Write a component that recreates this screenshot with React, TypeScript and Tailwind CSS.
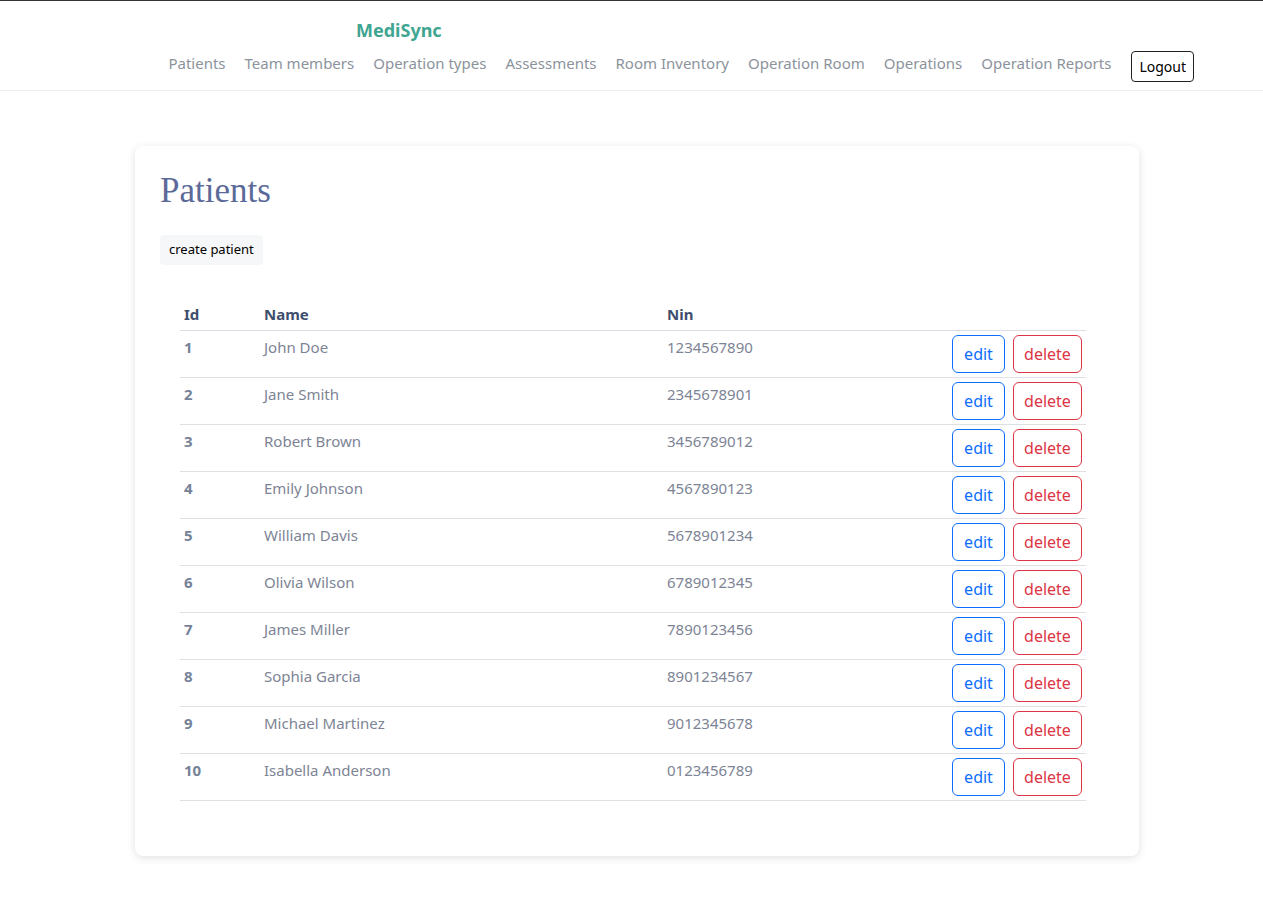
import React from "react";

const patients = [
  { id: 1, name: "John Doe", nin: "1234567890" },
  { id: 2, name: "Jane Smith", nin: "2345678901" },
  { id: 3, name: "Robert Brown", nin: "3456789012" },
  { id: 4, name: "Emily Johnson", nin: "4567890123" },
  { id: 5, name: "William Davis", nin: "5678901234" },
  { id: 6, name: "Olivia Wilson", nin: "6789012345" },
  { id: 7, name: "James Miller", nin: "7890123456" },
  { id: 8, name: "Sophia Garcia", nin: "8901234567" },
  { id: 9, name: "Michael Martinez", nin: "9012345678" },
  { id: 10, name: "Isabella Anderson", nin: "0123456789" },
];

const links = [
  "Patients",
  "Team members",
  "Operation types",
  "Assessments",
  "Room Inventory",
  "Operation Room",
  "Operations",
  "Operation Reports",
];

export default function App() {
  return (
    <div
      className="min-h-[914px] bg-white border-t border-[#333333]"
      style={{ fontFamily: '"Noto Sans", "Open Sans", Arial, sans-serif' }}
    >
      <header className="h-[90px] border-b border-[#eeeeee]">
        <div className="pl-[356px] pt-[17px] text-[18px] leading-[24px] font-bold text-[#3fa592]">
          MediSync
        </div>
        <nav className="flex items-center justify-end pr-[69px] mt-[9px]">
          <div className="flex items-center gap-[19px]">
            {links.map((l) => (
              <a
                key={l}
                className="mb-[8px] text-[15px] leading-[22px] text-[#8c939b] cursor-pointer"
              >
                {l}
              </a>
            ))}
            <button className="ml-[1px] h-[31px] px-[7px] border border-[#222222] rounded-[4px] text-[14px] text-black">
              Logout
            </button>
          </div>
        </nav>
      </header>

      <main className="pt-[55px] pl-[135px]">
        <div className="w-[1004px] rounded-[8px] bg-white shadow-[0_2px_8px_rgba(0,0,0,0.12)] px-[25px] pt-[23px] pb-[24px]">
          <h1
            className="text-[35px] leading-[43px] text-[#5b6a99]"
            style={{ fontFamily: '"Liberation Serif", "Times New Roman", serif' }}
          >
            Patients
          </h1>
          <button className="mt-[23px] h-[30px] px-[9px] rounded-[4px] bg-[#f6f7f8] text-[13px] text-black">
            create patient
          </button>
          <table className="mt-[33px] ml-[20px] mb-[31px] w-[906px] border-collapse text-[15px]">
            <thead>
              <tr className="border-b border-[#dcdde4]">
                <th className="w-[80px] px-[4px] py-[4px] leading-[24px] text-left font-bold text-[#3e4e6d]">
                  Id
                </th>
                <th className="w-[403px] px-[4px] py-[4px] leading-[24px] text-left font-bold text-[#3e4e6d]">
                  Name
                </th>
                <th className="px-[4px] py-[4px] leading-[24px] text-left font-bold text-[#3e4e6d]">
                  Nin
                </th>
                <th className="px-[4px] py-[4px]"></th>
              </tr>
            </thead>
            <tbody>
              {patients.map((p) => (
                <tr key={p.id} className="border-b border-[#dee0e4]">
                  <td className="px-[4px] py-[4px] align-top leading-[24px] font-bold text-[#768298]">
                    {p.id}
                  </td>
                  <td className="px-[4px] py-[4px] align-top leading-[24px] text-[#7d8495]">
                    {p.name}
                  </td>
                  <td className="px-[4px] py-[4px] align-top leading-[24px] text-[#7d8495]">
                    {p.nin}
                  </td>
                  <td className="px-[4px] py-[4px] align-top">
                    <div className="flex justify-end gap-[8px]">
                      <button className="h-[38px] w-[53px] rounded-[6px] border border-[#0d6efd] text-[#0d6efd] text-[16px]">
                        edit
                      </button>
                      <button className="h-[38px] w-[69px] rounded-[6px] border border-[#dc3545] text-[#dc3545] text-[16px]">
                        delete
                      </button>
                    </div>
                  </td>
                </tr>
              ))}
            </tbody>
          </table>
        </div>
      </main>
    </div>
  );
}
